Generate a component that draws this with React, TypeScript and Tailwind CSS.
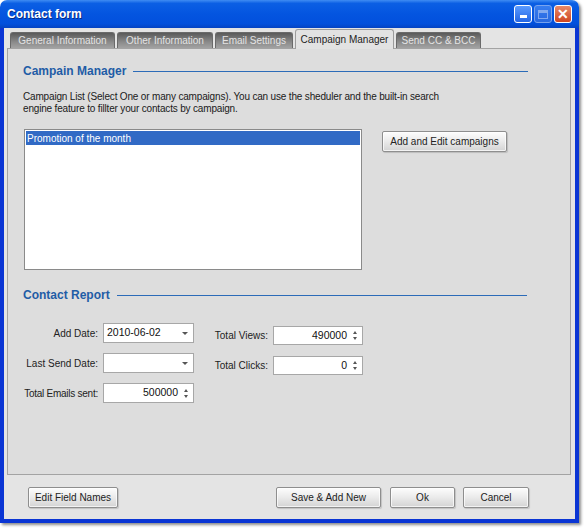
import type { ReactNode } from 'react'

const font = { fontFamily: '"Liberation Sans", Arial, sans-serif' }

function XpButton(props: { children: ReactNode; className?: string }) {
  return (
    <button
      type="button"
      className={
        'flex shrink-0 items-center justify-center whitespace-nowrap rounded-[2px] border border-[#8e8e8e] bg-[linear-gradient(#fdfdfd,#ececec_45%,#d4d4d4)] text-[10px] text-[#222] shadow-[inset_0_0_0_1px_rgba(255,255,255,0.7),1px_1px_1px_rgba(0,0,0,0.15)] ' +
        (props.className ?? '')
      }
    >
      {props.children}
    </button>
  )
}

function SectionHeader(props: { title: string; lineRight: string }) {
  return (
    <div className="flex h-[16px] items-center">
      <span className="text-[12px] font-bold text-[#1f5ca6]">{props.title}</span>
      <div className={'ml-[7px] h-px flex-1 bg-[#2b6bb8] ' + props.lineRight} />
    </div>
  )
}

function Arrow() {
  return <div className="h-0 w-0 border-x-[3px] border-t-[3px] border-x-transparent border-t-[#555]" />
}

function Spinner() {
  return (
    <div className="flex flex-col items-center gap-[3px]">
      <div className="h-0 w-0 border-x-[2.5px] border-b-[3px] border-x-transparent border-b-[#555]" />
      <div className="h-0 w-0 border-x-[2.5px] border-t-[3px] border-x-transparent border-t-[#555]" />
    </div>
  )
}

function DateBox(props: { value: string }) {
  return (
    <div className="flex h-[20px] w-[91px] shrink-0 items-center justify-between border border-[#a7a7a7] bg-white pl-[3px] pr-[5px] text-[10.5px] text-[#111]">
      <span>{props.value}</span>
      <Arrow />
    </div>
  )
}

function NumBox(props: { value: string; w: string; h: string }) {
  return (
    <div className={'flex shrink-0 items-center justify-end gap-[6px] border border-[#a7a7a7] bg-white pr-[5px] text-[10.5px] text-[#111] ' + props.w + ' ' + props.h}>
      <span>{props.value}</span>
      <Spinner />
    </div>
  )
}

function Label(props: { text: string; w: string; className?: string }) {
  return <span className={'shrink-0 whitespace-nowrap text-right ' + props.w + ' ' + (props.className ?? '')}>{props.text}</span>
}

function Tab(props: { label: string; w: string; active?: boolean }) {
  if (props.active) {
    return (
      <div className={'relative z-10 -mb-px flex h-[20px] items-center justify-center whitespace-nowrap rounded-t-[3px] border border-b-0 border-[#9c9c9c] bg-[#e2e2e2] text-[10px] text-[#222] ' + props.w}>
        {props.label}
      </div>
    )
  }
  return (
    <div className={'flex h-[16px] items-center justify-center whitespace-nowrap rounded-t-[3px] border border-b-0 border-[#6a6a6a] bg-[linear-gradient(#5a5a5a,#8a8a8a_60%,#a2a2a2)] text-[10px] text-[#e4e4e4] ' + props.w}>
      {props.label}
    </div>
  )
}

export default function App() {
  return (
    <div className="h-[529px] w-[585px] bg-white" style={font}>
      <div className="flex h-[523px] w-[579px] flex-col overflow-hidden rounded-t-[7px] shadow-[2px_2px_3px_rgba(0,0,0,0.45)]">
        {/* title bar */}
        <div className="flex h-[28px] shrink-0 items-center justify-between bg-[linear-gradient(#3f8cf3,#0b5fe4_12%,#0455e0_50%,#0250dc_85%,#0443c2)] pl-[7px] pr-[7px]">
          <span className="text-[12px] font-bold text-white [text-shadow:1px_1px_0_#0a2a80]">Contact form</span>
          <div className="flex gap-[2px]">
            <div className="flex h-[18px] w-[18px] items-end justify-center rounded-[3px] border border-white bg-[linear-gradient(#5a9bff,#2466e4)] pb-[4px]">
              <div className="h-[3px] w-[7px] bg-white" />
            </div>
            <div className="flex h-[18px] w-[18px] items-center justify-center rounded-[3px] border border-[#a8c4f4] bg-[linear-gradient(#4c8cf6,#3b74e0)] opacity-70">
              <div className="h-[9px] w-[10px] border border-t-[3px] border-[#b8cdf5]" />
            </div>
            <div className="flex h-[18px] w-[18px] items-center justify-center rounded-[3px] border border-white bg-[linear-gradient(#e88a6a,#cf4520)] text-[14px] font-bold leading-none text-white">
              ✕
            </div>
          </div>
        </div>
        {/* body */}
        <div className="flex flex-1 flex-col border-x-[4px] border-b-[4px] border-[#0a35d4] bg-[#e4e4e4]">
          <div className="flex flex-1 flex-col pl-[3px] pr-[4px] pt-[1px]">
            {/* tabs */}
            <div className="flex h-[19px] items-end gap-[2px] pl-[3px]">
              <Tab label="General Information" w="w-[105px]" />
              <Tab label="Other Information" w="w-[96px]" />
              <Tab label="Email Settings" w="w-[78px]" />
              <Tab label="Campaign Manager" w="w-[99px]" active />
              <Tab label="Send CC & BCC" w="w-[85px]" />
            </div>
            {/* panel */}
            <div className="flex h-[427px] flex-col border border-[#a3a3a3] bg-[#dddddd] px-[15px]">
              <div className="mt-[14px]">
                <SectionHeader title="Campain Manager" lineRight="mr-[27px]" />
              </div>
              <p className="mt-[12px] text-[10px] leading-[12px] tracking-[-0.17px] text-[#1a1a1a]">
                Campaign List (Select One or many campaigns). You can use the sheduler and the built-in search
                <br />
                engine feature to fillter your contacts by campaign.
              </p>
              <div className="mt-[14px] flex items-start">
                <div className="ml-[1px] h-[141px] w-[338px] shrink-0 border border-[#8a8a8a] bg-white p-px">
                  <div className="flex h-[14px] items-center bg-[#316ac5] pl-[1px] text-[10px] text-white">
                    Promotion of the month
                  </div>
                </div>
                <XpButton className="ml-[20px] mt-[2px] h-[21px] w-[125px]">Add and Edit campaigns</XpButton>
              </div>
              <div className="mt-[17px]">
                <SectionHeader title="Contact Report" lineRight="mr-[28px]" />
              </div>
              <div className="mt-[20px] flex items-start text-[10px] text-[#222]">
                <div className="flex flex-col gap-[10px]">
                  <div className="flex items-center gap-[5px]">
                    <Label text="Add Date:" w="w-[75px]" />
                    <DateBox value="2010-06-02" />
                  </div>
                  <div className="flex items-center gap-[5px]">
                    <Label text="Last Send Date:" w="w-[75px]" />
                    <DateBox value="" />
                  </div>
                  <div className="flex items-center gap-[5px]">
                    <Label text="Total Emails sent:" w="w-[75px]" className="tracking-[-0.25px]" />
                    <NumBox value="500000" w="w-[91px]" h="h-[20px]" />
                  </div>
                </div>
                <div className="ml-[18px] mt-[3px] flex flex-col gap-[11px]">
                  <div className="flex items-center gap-[5px]">
                    <Label text="Total Views:" w="w-[56px]" />
                    <NumBox value="490000" w="w-[90px]" h="h-[19px]" />
                  </div>
                  <div className="flex items-center gap-[5px]">
                    <Label text="Total Clicks:" w="w-[56px]" />
                    <NumBox value="0" w="w-[90px]" h="h-[19px]" />
                  </div>
                </div>
              </div>
            </div>
            {/* footer buttons */}
            <div className="flex items-start pt-[12px]">
              <XpButton className="ml-[21px] h-[21px] w-[90px]">Edit Field Names</XpButton>
              <XpButton className="ml-[158px] h-[21px] w-[105px]">Save &amp; Add New</XpButton>
              <XpButton className="ml-[9px] h-[21px] w-[65px]">Ok</XpButton>
              <XpButton className="ml-[8px] h-[21px] w-[66px]">Cancel</XpButton>
            </div>
          </div>
        </div>
      </div>
    </div>
  )
}
